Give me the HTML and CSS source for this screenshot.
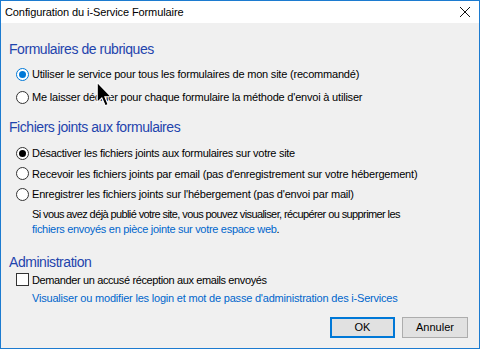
FILE: index.html
```html
<!DOCTYPE html>
<html lang="fr">
<head>
<meta charset="utf-8">
<title>Configuration du i-Service Formulaire</title>
<link rel="stylesheet" href="styles.css">
</head>
<body>
<div class="window">
  <div class="titlebar">
    <span class="title">Configuration du i-Service Formulaire</span>
    <svg class="close" width="12" height="12" viewBox="0 0 12 12"><path d="M1 1 L11 11 M11 1 L1 11" stroke="#111" stroke-width="1"/></svg>
  </div>
  <div class="content">
    <h2 class="heading h-first">Formulaires de rubriques</h2>
    <div class="group group-a">
      <div class="option"><span class="radio checked focus"></span><span>Utiliser le service pour tous les formulaires de mon site (recommandé)</span></div>
      <div class="option"><span class="radio"></span><span>Me laisser décider pour chaque formulaire la méthode d'envoi à utiliser</span></div>
    </div>
    <h2 class="heading h-second">Fichiers joints aux formulaires</h2>
    <div class="group group-b">
      <div class="option"><span class="radio checked"></span><span class="tight">Désactiver les fichiers joints aux formulaires sur votre site</span></div>
      <div class="option"><span class="radio"></span><span>Recevoir les fichiers joints par email (pas d'enregistrement sur votre hébergement)</span></div>
      <div class="option"><span class="radio"></span><span>Enregistrer les fichiers joints sur l'hébergement (pas d'envoi par mail)</span></div>
    </div>
    <p class="info"><span class="info-first">Si vous avez déjà publié votre site, vous pouvez visualiser, récupérer ou supprimer les</span><br><a class="link info-second" href="#">fichiers envoyés en pièce jointe sur votre espace web</a>.</p>
    <h2 class="heading h-third">Administration</h2>
    <div class="option check-row"><span class="checkbox"></span><span class="tighter">Demander un accusé réception aux emails envoyés</span></div>
    <a class="link admin-link" href="#">Visualiser ou modifier les login et mot de passe d'administration des i-Services</a>
    <div class="buttons">
      <button class="btn btn-default">OK</button>
      <button class="btn">Annuler</button>
    </div>
  </div>
  <svg class="cursor" width="17" height="27" viewBox="0 0 14 22"><path d="M1 1 L1 17.5 L4.8 13.8 L7.6 20.2 L10 19.2 L7.3 12.9 L12.6 12.9 Z" fill="#000" stroke="#fff" stroke-width="0.9" stroke-linejoin="miter"/></svg>
</div>
</body>
</html>
```
FILE: styles.css
```css
* { box-sizing: border-box; }
html, body { margin: 0; padding: 0; }
body {
  width: 480px;
  height: 349px;
  overflow: hidden;
  font-family: "Liberation Sans", Arial, sans-serif;
  font-size: 11px;
  letter-spacing: -0.2px;
  color: #000;
}
.window {
  position: relative;
  width: 480px;
  height: 349px;
  border: 1px solid #1c7bd0;
  background: #f0f0f0;
  display: flex;
  flex-direction: column;
}
.titlebar {
  height: 22px;
  background: #fff;
  display: flex;
  align-items: center;
  justify-content: space-between;
  padding: 0 8px 0 4px;
}
.title { font-size: 11px; line-height: 16px; letter-spacing: -0.1px; }
.close { display: block; }
.content {
  flex: 1;
  display: flex;
  flex-direction: column;
  padding: 0 11px 0 8px;
}
.heading {
  margin: 0;
  font-weight: normal;
  font-size: 14px;
  letter-spacing: -0.45px;
  line-height: 20px;
  color: #1f44ad;
}
.h-first { margin-top: 16px; }
.h-second { margin-top: 9px; }
.h-third { margin-top: 15px; }
.group { display: flex; flex-direction: column; margin-top: 4px; }
.group-a { gap: 1px; }
.group-a .option { height: 22px; }
.group-b { margin-top: 6px; }
.group-b .option { height: 20.5px; }
.option {
  display: flex;
  align-items: center;
  gap: 3px;
  padding-left: 7px;
  white-space: nowrap;
}
.tight { letter-spacing: -0.28px; }
.tighter { letter-spacing: -0.38px; }
.radio {
  flex: none;
  width: 13px;
  height: 13px;
  border: 1px solid #333;
  border-radius: 50%;
  background: #fff;
  display: flex;
  align-items: center;
  justify-content: center;
}
.radio.checked::after {
  content: "";
  width: 7px;
  height: 7px;
  border-radius: 50%;
  background: #000;
}
.radio.focus { border-color: #0078d7; }
.radio.focus::after { background: #0078d7; }
.checkbox {
  flex: none;
  width: 13px;
  height: 13px;
  border: 1px solid #333;
  background: #fff;
}
.info {
  margin: 2px 0 0 0;
  padding-left: 23px;
  line-height: 15px;
  white-space: nowrap;
}
.info-first { letter-spacing: -0.6px; }
.info-second { letter-spacing: -0.3px; }
.link { color: #0066cc; text-decoration: none; }
.check-row { height: 18px; margin-top: -1px; }
.admin-link { margin-top: 2.5px; padding-left: 23px; line-height: 15px; white-space: nowrap; }
.buttons {
  display: flex;
  justify-content: flex-end;
  gap: 7px;
  margin-top: 10.5px;
}
.btn {
  width: 66px;
  height: 21px;
  padding: 0;
  font-family: inherit;
  font-size: 11px;
  letter-spacing: 0;
  color: #000;
  background: #e1e1e1;
  border: 1px solid #adadad;
}
.btn-default { border: 2px solid #0078d7; width: 65px; }
.cursor {
  position: absolute;
  left: 95px;
  top: 80px;
}
```
